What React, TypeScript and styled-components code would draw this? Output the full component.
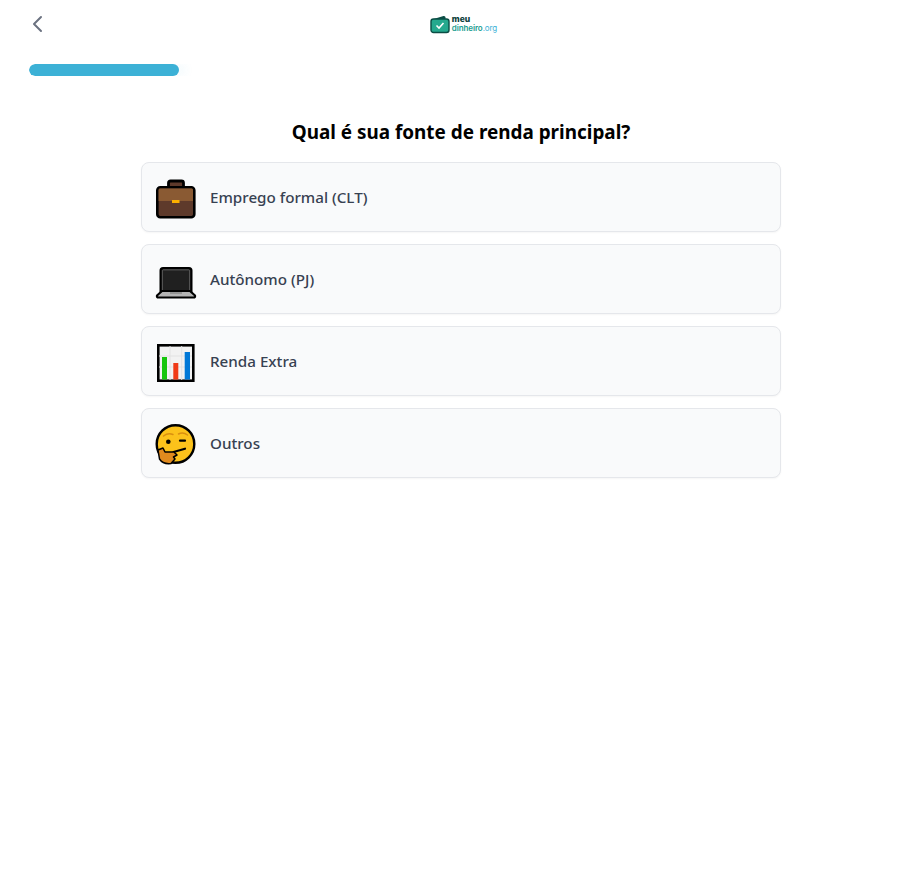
import React from "react";
import styled, {createGlobalStyle} from "styled-components";

const GlobalStyle = createGlobalStyle`
  html, body {
    margin: 0;
    padding: 0;
    background: #fff;
    font-family: "Noto Sans", "Liberation Sans", sans-serif;
  }
`

const Page = styled.div`
  display: flex;
  flex-direction: column;
  min-height: 885px;
  padding-left: 9px;
  box-sizing: border-box;
`

const TopBar = styled.header`
  position: relative;
  display: flex;
  align-items: center;
  justify-content: center;
  height: 48px;
`

const BackButton = styled.button`
  position: absolute;
  left: 16px;
  top: 12px;
  width: 24px;
  height: 24px;
  padding: 0;
  border: 0;
  background: none;
  color: #6b7280;
  display: flex;
`

const Logo = styled.div`
  display: flex;
  align-items: center;
  gap: 2px;
  margin-left: 5px;
`

const LogoWords = styled.div`
  display: flex;
  flex-direction: column;
  font-family: "Inter", sans-serif;
  font-size: 8px;
  line-height: 9px;
  letter-spacing: -0.1px;
`

const LogoTop = styled.span`
  color: #0b3d3a;
  font-size: 8.500px;
  font-weight: 800;
`

const LogoBottom = styled.span`
  color: #1a9d8f;
  font-weight: 600;
`

const LogoOrg = styled.span`
  color: #3cb1d6;
  font-weight: 400;
`

const ProgressTrack = styled.div`
  margin: 16px 20px 0;
  height: 12px;
  border-radius: 6px;
  overflow: hidden;
  background: #fff;
`

const ProgressFill = styled.div`
  height: 100%;
  border-radius: 6px;
  background: #3cb1d6;
  box-shadow: 8px 0 8px rgba(60, 177, 214, 0.05);
`

const Title = styled.h1`
  margin: 43px 0 17px;
  font-size: 18.900px;
  line-height: 26px;
  font-weight: 700;
  color: #000;
  text-align: center;
`

const Options = styled.div`
  display: flex;
  flex-direction: column;
  gap: 12px;
  width: 640px;
  margin: 0 auto;
`

const Option = styled.button`
  display: flex;
  align-items: center;
  gap: 12px;
  height: 70px;
  padding: 0 12px;
  box-sizing: border-box;
  border: 1px solid #e5e7eb;
  border-radius: 8px;
  background: #f9fafb;
  box-shadow: 0 1px 2px rgba(0, 0, 0, 0.04);
  font-family: inherit;
  text-align: left;
`

const OptionLabel = styled.span`
  font-size: 15.200px;
  font-weight: 500;
  color: #374151;
`

const Emoji = styled.svg`
  width: 44px;
  height: 44px;
  flex: none;
`

const Briefcase = () => (
  <Emoji viewBox="0 0 44 44">
    <path d="M14.500 13V8Q14.500 6 16.500 6H27.500Q29.500 6 29.500 8V13Z" fill="#5e3a2b" stroke="#000" strokeWidth="2.800" strokeLinejoin="round"/>
    <rect x="3.300" y="12.300" width="37" height="30" rx="3" fill="#5e3a2b" stroke="#000" strokeWidth="2.600"/>
    <path d="M4.600 15Q4.600 13.600 6 13.600H37.600Q39 13.600 39 15V26H4.600Z" fill="#8a5a33"/>
    <rect x="18" y="25" width="7.500" height="3" fill="#fcb000"/>
  </Emoji>
)

const Laptop = () => (
  <Emoji viewBox="0 0 44 44">
    <rect x="7" y="11.500" width="30" height="25" rx="2" fill="#202020" stroke="#000" strokeWidth="3"/>
    <rect x="8.300" y="12.800" width="27.400" height="22" rx="0.800" fill="none" stroke="#7a7a7a" strokeWidth="0.800"/>
    <path d="M8 34H36L41 38.500Q41.500 40.500 39.500 40.500H4.500Q2.500 40.500 3 38.500Z" fill="#b4b4b4" stroke="#000" strokeWidth="2.200" strokeLinejoin="round"/>
    <rect x="16" y="35" width="12" height="2" fill="#949494"/>
  </Emoji>
)

const BarChart = () => (
  <Emoji viewBox="0 0 44 44">
    <rect x="4.300" y="6.300" width="35" height="35.400" fill="#f2f2f2" stroke="#000" strokeWidth="2.600"/>
    <path d="M5 17H38M5 28H38M16 7V41M27.700 7V41" stroke="#e2e2e2" strokeWidth="1"/>
    <rect x="8" y="18" width="5" height="22.500" fill="#16c60c"/>
    <rect x="19.300" y="24" width="5" height="16.500" fill="#f03a17"/>
    <rect x="30.700" y="13" width="5.300" height="27.500" fill="#0078d7"/>
  </Emoji>
)

const Thinking = () => (
  <Emoji viewBox="0 0 44 44">
    <circle cx="21.500" cy="23" r="18.800" fill="#fcc21b" stroke="#000" strokeWidth="2.400"/>
    <path d="M9.500 15Q14 11.500 19 13.500" fill="none" stroke="#d98f10" strokeWidth="1.500" strokeLinecap="round"/>
    <path d="M24.500 13Q29 10.500 33.500 14" fill="none" stroke="#d98f10" strokeWidth="1.500" strokeLinecap="round"/>
    <circle cx="14.300" cy="20.700" r="2.300" fill="#000"/>
    <path d="M26 19.700H31" stroke="#000" strokeWidth="2.200" strokeLinecap="round"/>
    <path d="M19.500 31L31 27.700" stroke="#000" strokeWidth="2.200" strokeLinecap="round"/>
    <path d="M4 29L9 27L11 31L20 31L23 34L19.500 36L21 38L17 42.500Q9 43.500 5.500 38Z" fill="#e08a1e" stroke="#000" strokeWidth="1.500" strokeLinejoin="round"/>
  </Emoji>
)

const WalletLogo = () => (
  <svg width="20" height="20" viewBox="0 0 20 20">
    <path d="M2 5.500L13.500 2Q15.500 1.700 15.500 3.500V6H2Z" fill="#0b4d45"/>
    <rect x="1" y="5" width="18" height="13.500" rx="2.500" fill="#25a98e" stroke="#0b4d45" strokeWidth="1.400"/>
    <path d="M6.500 11.500L9 14L13.500 9" fill="none" stroke="#fff" strokeWidth="1.600"/>
  </svg>
)

const options = [
  {label: "Emprego formal (CLT)", icon: <Briefcase/>},
  {label: "Autônomo (PJ)", icon: <Laptop/>},
  {label: "Renda Extra", icon: <BarChart/>},
  {label: "Outros", icon: <Thinking/>},
]

const App: React.FC = () => {
  return (
    <Page>
      <GlobalStyle/>
      <TopBar>
        <BackButton aria-label="Voltar">
          <svg width="24" height="24" viewBox="0 0 24 24" fill="none" stroke="currentColor" strokeWidth="2" strokeLinecap="round" strokeLinejoin="round">
            <path d="M16 5L9 12L16 19"/>
          </svg>
        </BackButton>
        <Logo>
          <WalletLogo/>
          <LogoWords>
            <LogoTop>meu</LogoTop>
            <span><LogoBottom>dinheiro</LogoBottom><LogoOrg>.org</LogoOrg></span>
          </LogoWords>
        </Logo>
      </TopBar>
      <ProgressTrack>
        <ProgressFill style={{width: `${150 / 864 * 100}%`}}/>
      </ProgressTrack>
      <Title>Qual é sua fonte de renda principal?</Title>
      <Options>
        {options.map(option => (
          <Option key={option.label}>
            {option.icon}
            <OptionLabel>{option.label}</OptionLabel>
          </Option>
        ))}
      </Options>
    </Page>
  )
}

export default App
